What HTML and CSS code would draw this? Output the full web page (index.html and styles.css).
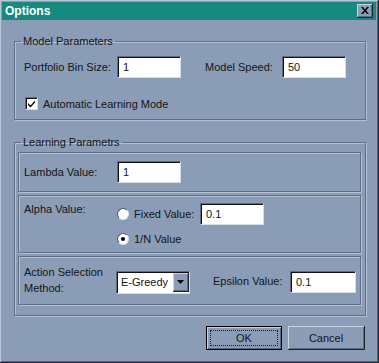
FILE: index.html
```html
<!DOCTYPE html>
<html lang="en">
<head>
  <meta charset="UTF-8" />
  <title>Options</title>
  <link rel="stylesheet" href="styles.css">
</head>
<body>
  <div class="window">
    <div class="titlebar">
      <span class="title">Options</span>
      <span class="close">
        <svg width="8" height="7" viewBox="0 0 8 7"><path d="M0 0h2l2 2.5L6 0h2L5 3.5 8 7H6L4 4.5 2 7H0l3-3.5z" fill="#000"/></svg>
      </span>
    </div>

    <div class="content">
      <fieldset class="group model">
        <legend>Model Parameters</legend>
        <div class="row">
          <label class="lbl bin">Portfolio Bin Size:</label>
          <span class="field">1</span>
          <label class="lbl speed">Model Speed:</label>
          <span class="field">50</span>
        </div>
        <div class="check-row">
          <span class="checkbox">
            <svg width="9" height="9" viewBox="0 0 9 9"><path d="M1 4l2.5 2.5L8 1.5v2L3.5 8.5 1 6z" fill="#000"/></svg>
          </span>
          Automatic Learning Mode
        </div>
      </fieldset>

      <fieldset class="group learning">
        <legend>Learning Parametrs</legend>

        <div class="panel lambda">
          <label class="lbl bin">Lambda Value:</label>
          <span class="field">1</span>
        </div>

        <div class="panel alpha">
          <label class="lbl alpha-lbl">Alpha Value:</label>
          <div class="radios">
            <div class="radio-row">
              <span class="radio"></span>
              <span class="radio-text">Fixed Value:</span>
              <span class="field">0.1</span>
            </div>
            <div class="radio-row">
              <span class="radio on"></span>
              <span class="radio-text">1/N Value</span>
            </div>
          </div>
        </div>

        <div class="panel action">
          <label class="lbl action-lbl">Action Selection<br>Method:</label>
          <div class="select">
            <span class="select-text">E-Greedy</span>
            <span class="select-btn">
              <svg width="7" height="4" viewBox="0 0 7 4"><path d="M0 0h7L3.5 4z" fill="#000"/></svg>
            </span>
          </div>
          <label class="lbl eps">Epsilon Value:</label>
          <span class="field eps-field">0.1</span>
        </div>
      </fieldset>

      <div class="buttons">
        <button class="btn default"><span class="focus">OK</span></button>
        <button class="btn">Cancel</button>
      </div>
    </div>
  </div>
</body>
</html>
```

FILE: styles.css
```css
body {
  margin: 0;
  padding: 0;
  font-family: 'Liberation Sans', Arial, sans-serif;
  font-size: 11px;
  color: #141414;
  background: #8b9db6;
}

.window {
  width: 379px;
  height: 363px;
  box-sizing: border-box;
  padding: 2px;
  background: #8b9db6;
  border-right: 1px solid #1c2430;
  border-bottom: 1px solid #1c2430;
  box-shadow: inset 1px 1px 0 #b9c6d7, inset -1px -1px 0 #55647a;
}

.titlebar {
  height: 18px;
  background: #168a7f;
  display: flex;
  align-items: center;
  justify-content: space-between;
  padding: 0 3px 0 3px;
}

.title {
  color: #fff;
  font-weight: bold;
  font-size: 12px;
}

.close {
  width: 16px;
  height: 14px;
  box-sizing: border-box;
  background: #8b9db6;
  display: flex;
  align-items: center;
  justify-content: center;
  border-right: 1px solid #1c2430;
  border-bottom: 1px solid #1c2430;
  box-shadow: inset 1px 1px 0 #c9d3e0, inset -1px -1px 0 #5d6c82;
}

.content {
  padding: 14px 10px 0 12px;
}

.group {
  margin: 0;
  padding: 0;
  border: 1px solid #5f6f86;
  box-shadow: inset 1px 1px 0 #b4c1d3, 1px 1px 0 #b4c1d3;
  min-width: 0;
}

.group legend {
  padding: 0 2px;
  line-height: 14px;
}

.model {
  height: 86px;
  box-sizing: border-box;
  padding: 8px 0 0 9px;
}

.model legend {
  margin-left: -3px;
}

.row {
  display: flex;
  align-items: center;
}

.lbl {
  display: block;
  flex-shrink: 0;
  white-space: nowrap;
}

.bin {
  width: 93px;
}

.speed {
  width: 77px;
  margin-left: 24px;
}

.field {
  width: 64px;
  height: 22px;
  flex-shrink: 0;
  box-sizing: border-box;
  background: #fff;
  border-top: 1px solid #5d6c82;
  border-left: 1px solid #5d6c82;
  border-right: 1px solid #d6deea;
  border-bottom: 1px solid #d6deea;
  box-shadow: inset 1px 1px 0 #101010;
  padding: 3px 0 0 5px;
  line-height: 15px;
}

.check-row {
  display: flex;
  align-items: center;
  margin-top: 19px;
  margin-left: 1px;
}

.checkbox {
  width: 13px;
  height: 13px;
  box-sizing: border-box;
  background: #fff;
  border-top: 1px solid #5d6c82;
  border-left: 1px solid #5d6c82;
  border-right: 1px solid #d6deea;
  border-bottom: 1px solid #d6deea;
  box-shadow: inset 1px 1px 0 #101010;
  display: flex;
  align-items: center;
  justify-content: center;
  margin-right: 5px;
}

.learning {
  margin-top: 15px;
  height: 181px;
  box-sizing: border-box;
  padding: 3px 4px 0 3px;
  display: flex;
  flex-direction: column;
  gap: 3px;
}

.learning legend {
  margin-left: 3px;
}

.panel {
  border: 1px solid #5f6f86;
  box-shadow: inset 1px 1px 0 #b4c1d3, 1px 1px 0 #b4c1d3;
  box-sizing: border-box;
  display: flex;
  padding-left: 5px;
}

.lambda {
  height: 40px;
  align-items: center;
}

.alpha {
  height: 58px;
  padding-top: 6px;
}

.alpha-lbl {
  width: 93px;
  margin-top: 1px;
}

.radios {
  display: flex;
  flex-direction: column;
  gap: 2px;
}

.radio-row {
  display: flex;
  align-items: center;
  height: 23px;
}

.radio {
  width: 12px;
  height: 12px;
  box-sizing: border-box;
  border-radius: 50%;
  background: #fff;
  border-top: 1px solid #4b586b;
  border-left: 1px solid #4b586b;
  border-right: 1px solid #dde4ee;
  border-bottom: 1px solid #dde4ee;
  display: flex;
  align-items: center;
  justify-content: center;
  margin-right: 5px;
}

.radio.on::after {
  content: "";
  width: 4px;
  height: 4px;
  border-radius: 50%;
  background: #000;
}

.radio-text {
  width: 66px;
  white-space: nowrap;
}

.action {
  height: 49px;
  align-items: center;
}

.action-lbl {
  width: 92px;
  line-height: 16px;
  margin-top: -2px;
}

.select {
  width: 74px;
  height: 23px;
  flex-shrink: 0;
  box-sizing: border-box;
  background: #fff;
  border-top: 1px solid #5d6c82;
  border-left: 1px solid #5d6c82;
  border-right: 1px solid #d6deea;
  border-bottom: 1px solid #d6deea;
  box-shadow: inset 1px 1px 0 #101010;
  display: flex;
  align-items: stretch;
  margin-top: 4px;
}

.select-text {
  flex: 1;
  padding: 4px 0 0 4px;
}

.select-btn {
  width: 15px;
  background: #8b9db6;
  display: flex;
  align-items: center;
  justify-content: center;
  border-right: 1px solid #1c2430;
  border-bottom: 1px solid #1c2430;
  box-shadow: inset 1px 1px 0 #c9d3e0, inset -1px -1px 0 #5d6c82;
  margin: 1px 0 1px 0;
}

.eps {
  width: 77px;
  margin-left: 23px;
}

.eps-field {
  width: 66px;
  margin-top: 3px;
}

.buttons {
  display: flex;
  justify-content: flex-end;
  gap: 6px;
  margin-top: 10px;
  padding-right: 1px;
}

.btn {
  width: 77px;
  height: 24px;
  box-sizing: border-box;
  font-family: 'Liberation Sans', Arial, sans-serif;
  font-size: 11px;
  color: #141414;
  background: #8b9db6;
  border: none;
  border-right: 1px solid #1c2430;
  border-bottom: 1px solid #1c2430;
  box-shadow: inset 1px 1px 0 #c9d3e0, inset -1px -1px 0 #5d6c82;
  padding: 0;
}

.btn.default {
  width: 76px;
  border: 1px solid #000;
  box-shadow: inset 1px 1px 0 #c9d3e0, inset -1px -1px 0 #5d6c82;
  padding: 3px;
}

.focus {
  display: flex;
  align-items: center;
  justify-content: center;
  height: 100%;
  border: 1px dotted #1c1c1c;
  box-sizing: border-box;
}
```
